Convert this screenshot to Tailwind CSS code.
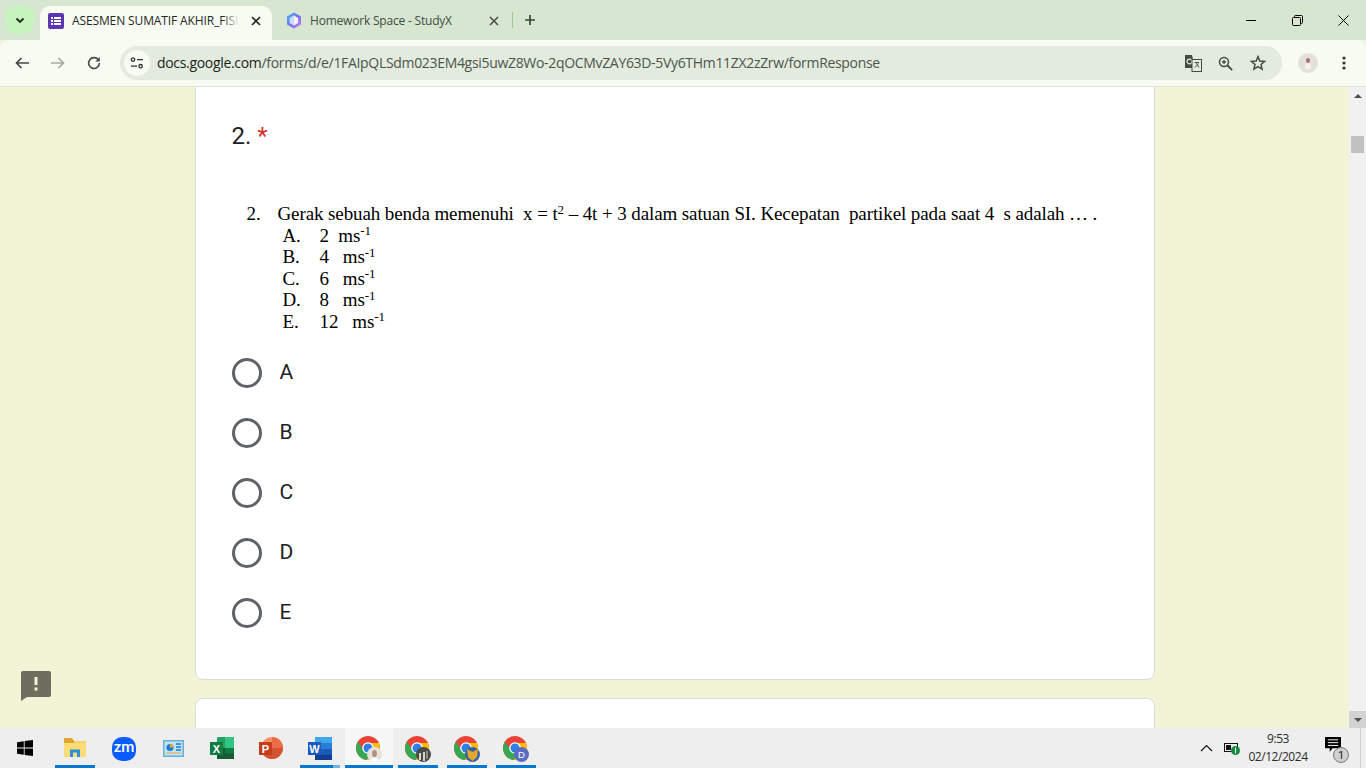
<!DOCTYPE html>
<html lang="en">
<head>
    <meta charset="UTF-8">
    <meta name="viewport" content="width=device-width, initial-scale=1.0">
    <title>ASESMEN SUMATIF AKHIR_FISIKA</title>
    <script src="https://cdn.jsdelivr.net/npm/@tailwindcss/browser@4"></script>
</head>
<body class="w-[1366px] h-[768px] overflow-hidden flex flex-col bg-[#f3f3d5] font-['Roboto',sans-serif]">

    <!-- shared chrome logo -->
    <svg class="hidden">
        <symbol id="chrome" viewBox="0 0 24 24">
            <circle cx="12" cy="12" r="12" fill="#ea4335"/>
            <path d="M12 7H22.8A12 12 0 0 1 10.6 23.9L16.3 14.5Z" fill="#fbbc05"/>
            <path d="M7.7 14.5 2 5.4A12 12 0 0 0 10.6 23.9L16.3 14.5Z" fill="#34a853"/>
            <circle cx="12" cy="12" r="5.8" fill="#fff"/>
            <circle cx="12" cy="12" r="4.5" fill="#2f7fe6"/>
        </symbol>
    </svg>

    <!-- tab strip -->
    <div class="h-[40px] bg-[#d6e6d0] flex items-start shrink-0 relative">
        <div class="w-[28px] h-[28px] mt-[6px] ml-[6px] rounded-[9px] bg-[#c7f5bd] flex items-center justify-center">
            <svg width="10" height="7" viewBox="0 0 10 7"><path d="M1.5 1.5 5 5l3.5-3.5" fill="none" stroke="#1f2a1f" stroke-width="1.8"/></svg>
        </div>
        <div class="w-[232px] h-[34px] mt-[6px] ml-[6px] bg-[#f7fbf2] rounded-t-[10px] flex items-center pl-[8px] pr-[11px] pb-[5px]">
            <div class="w-[16px] h-[16px] rounded-[2px] bg-[#5e35b1] flex items-center justify-center gap-[1px] shrink-0">
                <div class="flex flex-col gap-[1px]">
                    <div class="w-[2px] h-[2px] bg-white"></div>
                    <div class="w-[2px] h-[2px] bg-white"></div>
                    <div class="w-[2px] h-[2px] bg-white"></div>
                </div>
                <div class="flex flex-col gap-[1px]">
                    <div class="w-[7px] h-[2px] bg-white"></div>
                    <div class="w-[7px] h-[2px] bg-white"></div>
                    <div class="w-[7px] h-[2px] bg-white"></div>
                </div>
            </div>
            <div class="ml-[8px] w-[167px] h-[18px] relative leading-[18px] overflow-hidden whitespace-nowrap text-[12px] text-[#1f2a1f] font-['Open_Sans',sans-serif] tracking-[-0.12px]">ASESMEN SUMATIF AKHIR_FISIKA
                <div class="absolute right-0 top-0 w-[16px] h-full bg-gradient-to-r from-transparent to-[#f7fbf2]"></div>
            </div>
            <svg class="ml-auto" width="10" height="10" viewBox="0 0 10 10"><path d="M1 1l8 8M9 1 1 9" stroke="#1f2a1f" stroke-width="1.6"/></svg>
        </div>
        <div class="w-[241px] h-[34px] mt-[6px] flex items-center pl-[14px] pr-[14px] pb-[5px]">
            <svg width="16" height="17" viewBox="0 0 16 17">
                <defs>
                    <linearGradient id="gem" x1="0" y1="0" x2="1" y2="1">
                        <stop offset="0" stop-color="#38b6f5"/>
                        <stop offset=".55" stop-color="#7b6cf2"/>
                        <stop offset="1" stop-color="#d77bf0"/>
                    </linearGradient>
                </defs>
                <path d="M8 .5 15 4.5V12.5L8 16.5 1 12.5V4.5Z" fill="url(#gem)"/>
                <path d="M8 3.5 12.2 6V11L8 13.5 3.8 11V6Z" fill="#eef0ff"/>
                <path d="M8 3.5V13.5L3.8 11V6Z" fill="#c9d8ff"/>
            </svg>
            <div class="ml-[8px] text-[12px] leading-[18px] text-[#444b44] whitespace-nowrap font-['Open_Sans',sans-serif] tracking-[-0.2px]">Homework Space - StudyX</div>
            <svg class="ml-auto" width="10" height="10" viewBox="0 0 10 10"><path d="M1 1l8 8M9 1 1 9" stroke="#444b44" stroke-width="1.5"/></svg>
        </div>
        <div class="w-[1px] h-[16px] mt-[12px] -ml-[1px] bg-[#9fc695]"></div>
        <svg class="mt-[14px] ml-[11px]" width="12" height="12" viewBox="0 0 12 12"><path d="M6 1v10M1 6h10" stroke="#3c463c" stroke-width="1.7"/></svg>
        <div class="ml-auto flex items-center h-[40px]">
            <div class="w-[46px] flex justify-center"><div class="w-[10px] h-[1px] bg-black"></div></div>
            <div class="w-[46px] flex justify-center">
                <svg width="11" height="11" viewBox="0 0 11 11" fill="none" stroke="#000"><rect x=".5" y="2.5" width="8" height="8" rx="1"/><path d="M2.5 2.5V1.5a1 1 0 0 1 1-1h6a1 1 0 0 1 1 1v6a1 1 0 0 1-1 1h-1"/></svg>
            </div>
            <div class="w-[46px] flex justify-center">
                <svg width="11" height="11" viewBox="0 0 11 11"><path d="M.5.5l10 10M10.5.5l-10 10" stroke="#000"/></svg>
            </div>
        </div>
    </div>

    <!-- toolbar -->
    <div class="h-[47px] bg-[#f7fbf2] rounded-t-[8px] border-b border-[#dfe3da] flex items-center shrink-0">
        <div class="w-[120px] flex items-center pl-[15px] shrink-0">
            <svg width="14" height="12" viewBox="0 0 14 12"><path d="M6.5 1 1.5 6l5 5M2 6h12" fill="none" stroke="#444b44" stroke-width="1.7"/></svg>
            <svg class="ml-[22px]" width="14" height="12" viewBox="0 0 14 12"><path d="M7.5 1l5 5-5 5M12 6H0" fill="none" stroke="#a4aaa2" stroke-width="1.7"/></svg>
            <svg class="ml-[22px]" width="14" height="14" viewBox="0 0 14 14"><path d="M11.6 4.2A5.4 5.4 0 1 0 12.4 7" fill="none" stroke="#444b44" stroke-width="1.6"/><path d="M12.8 1v4.4H8.4Z" fill="#444b44"/></svg>
        </div>
        <div class="w-[1162px] h-[34px] rounded-full bg-[#e3ebdf] flex items-center pl-[4px]">
            <div class="w-[26px] h-[26px] rounded-full bg-[#f7fbf2] flex items-center justify-center shrink-0">
                <svg width="14" height="12" viewBox="0 0 14 12" fill="none" stroke="#2d352d" stroke-width="1.3"><circle cx="3" cy="2.6" r="1.7"/><path d="M7 2.6h6M1 9.2h6"/><circle cx="10.6" cy="9.2" r="1.7"/></svg>
            </div>
            <div class="ml-[7px] text-[14px] leading-[18px] whitespace-nowrap font-['Open_Sans',sans-serif] tracking-[-0.32px] text-[#4d544d]"><span class="text-[#1c231c]">docs.google.com</span>/forms/d/e/1FAIpQLSdm023EM4gsi5uwZ8Wo-2qOCMvZAY63D-5Vy6THm11ZX2zZrw/formResponse</div>
            <div class="ml-auto flex items-center pr-[16px]">
                <svg width="17" height="17" viewBox="0 0 17 17">
                    <path d="M0 0h7l3 13H0Z" fill="#444b44"/>
                    <circle cx="4.5" cy="6.5" r="2.4" fill="none" stroke="#e3ebdf" stroke-width="1.2"/>
                    <rect x="7" y="4.5" width="9.5" height="12" fill="#e3ebdf" stroke="#444b44"/>
                    <path d="M9.5 7.5h4.5M11 7.5l3 5M13.5 8.5l-3.5 4" stroke="#444b44" stroke-width=".9"/>
                </svg>
                <svg class="ml-[16px]" width="15" height="15" viewBox="0 0 15 15" fill="none" stroke="#444b44"><circle cx="6" cy="6" r="4.5" stroke-width="1.5"/><path d="M9.5 9.5l4.7 4.7" stroke-width="1.8"/><path d="M4 6h4M6 4v4" stroke-width="1.3"/></svg>
                <svg class="ml-[17px]" width="16" height="16" viewBox="0 0 16 16"><path d="M8 1.6 9.8 6l4.8.4-3.6 3.1 1.1 4.7L8 11.7l-4.1 2.5L5 9.5 1.4 6.4 6.2 6Z" fill="none" stroke="#444b44" stroke-width="1.5"/></svg>
            </div>
        </div>
        <div class="ml-[16px] w-[20px] h-[20px] rounded-full bg-[#e4e0da] flex flex-col items-center justify-center shrink-0">
            <div class="w-[4px] h-[5px] rounded-full bg-[#a8776a]"></div>
            <div class="w-[6px] h-[6px] rounded-t-[3px] bg-[#f4f2ef]"></div>
        </div>
        <svg class="ml-[24px]" width="4" height="14" viewBox="0 0 4 14" fill="#2d352d"><circle cx="2" cy="2" r="1.6"/><circle cx="2" cy="7" r="1.6"/><circle cx="2" cy="12" r="1.6"/></svg>
    </div>

    <!-- page -->
    <div class="flex-1 flex min-h-0">
        <div class="flex-1 overflow-hidden relative flex flex-col items-center">
            <div class="w-[960px] h-[601px] -mt-[8px] shrink-0 bg-white border border-[#dadce0] rounded-[8px] pl-[36px] pt-[41px]">
                <div class="text-[24px] leading-[30px] text-[#202124]">2. <span class="text-[#d93025]">*</span></div>
                <div class="mt-[52px] ml-[15px] font-['Liberation_Serif',serif] text-black text-[19px] tracking-[-0.1px]">
                    <div class="flex whitespace-pre h-[21.6px] leading-[21.6px]"><span class="w-[31px]">2.</span><span>Gerak sebuah benda memenuhi  x = t<sup class="text-[13px] leading-none">2</sup> – 4t + 3 dalam satuan SI. Kecepatan  partikel pada saat 4  s adalah … .</span></div>
                    <div class="ml-[36px] whitespace-pre flex h-[21.6px] leading-[21.6px]"><span class="w-[37px]">A.</span><span>2  ms<sup class="text-[13px] leading-none">-1</sup></span></div>
                    <div class="ml-[36px] whitespace-pre flex h-[21.6px] leading-[21.6px]"><span class="w-[37px]">B.</span><span>4   ms<sup class="text-[13px] leading-none">-1</sup></span></div>
                    <div class="ml-[36px] whitespace-pre flex h-[21.6px] leading-[21.6px]"><span class="w-[37px]">C.</span><span>6   ms<sup class="text-[13px] leading-none">-1</sup></span></div>
                    <div class="ml-[36px] whitespace-pre flex h-[21.6px] leading-[21.6px]"><span class="w-[37px]">D.</span><span>8   ms<sup class="text-[13px] leading-none">-1</sup></span></div>
                    <div class="ml-[36px] whitespace-pre flex h-[21.6px] leading-[21.6px]"><span class="w-[37px]">E.</span><span>12   ms<sup class="text-[13px] leading-none">-1</sup></span></div>
                </div>
                <div class="mt-[25px] flex flex-col gap-[30px]">
                    <div class="flex items-center h-[30px]"><div class="w-[30px] h-[30px] rounded-full border-[3px] border-[#5f6368]"></div><span class="ml-[18px] text-[21px] text-[#202124]">A</span></div>
                    <div class="flex items-center h-[30px]"><div class="w-[30px] h-[30px] rounded-full border-[3px] border-[#5f6368]"></div><span class="ml-[18px] text-[21px] text-[#202124]">B</span></div>
                    <div class="flex items-center h-[30px]"><div class="w-[30px] h-[30px] rounded-full border-[3px] border-[#5f6368]"></div><span class="ml-[18px] text-[21px] text-[#202124]">C</span></div>
                    <div class="flex items-center h-[30px]"><div class="w-[30px] h-[30px] rounded-full border-[3px] border-[#5f6368]"></div><span class="ml-[18px] text-[21px] text-[#202124]">D</span></div>
                    <div class="flex items-center h-[30px]"><div class="w-[30px] h-[30px] rounded-full border-[3px] border-[#5f6368]"></div><span class="ml-[18px] text-[21px] text-[#202124]">E</span></div>
                </div>
            </div>
            <div class="w-[960px] h-[100px] mt-[18px] shrink-0 bg-white border border-[#dadce0] rounded-[8px]"></div>
            <!-- report button floats over page -->
            <svg class="absolute left-[21px] top-[584px]" width="30" height="30" viewBox="0 0 30 30">
                <path d="M2 0h26a2 2 0 0 1 2 2v22a2 2 0 0 1-2 2H6l-6 4V2a2 2 0 0 1 2-2Z" fill="#6d6e5d"/>
                <rect x="13.5" y="6" width="3" height="8" fill="#f3f3d5"/><rect x="13.5" y="16.5" width="3" height="3" fill="#f3f3d5"/>
            </svg>
        </div>
        <!-- scrollbar -->
        <div class="w-[17px] bg-[#f1f1f1] flex flex-col items-center shrink-0 relative">
            <div class="h-[17px] w-full flex items-center justify-center"><div class="w-0 h-0 border-x-[4px] border-x-transparent border-b-[4px] border-b-[#505050]"></div></div>
            <div class="w-[13px] h-[17px] mt-[32px] bg-[#c1c1c1]"></div>
            <div class="mt-auto h-[17px] w-full bg-[#d2d2d2] flex items-center justify-center"><div class="w-0 h-0 border-x-[4px] border-x-transparent border-t-[4px] border-t-[#505050]"></div></div>
        </div>
    </div>

    <!-- taskbar -->
    <div class="h-[40px] bg-[#eeeeee] flex items-stretch shrink-0">
        <div class="w-[50px] flex items-center justify-center">
            <svg width="16" height="16" viewBox="0 0 16 16" fill="#000"><path d="M0 2.2 6.8 1.2V7.5H0ZM7.6 1.1 16 0V7.5H7.6ZM0 8.4H6.8V14.8L0 13.8ZM7.6 8.4H16V16L7.6 14.9Z"/></svg>
        </div>
        <div class="w-[40px] ml-[5px] border-b-[3px] border-[#0078d4] flex items-center justify-center pt-[2px]">
            <svg width="22" height="19" viewBox="0 0 22 19"><path d="M0 3h22v16H0Z" fill="#f9d463"/><path d="M0 1a1 1 0 0 1 1-1h7l2 2.5V5H0Z" fill="#e0a52c"/><path d="M0 5h22v14H0Z" fill="#fbdc77"/><path d="M6 11.5h10V19h-3v-4.5H9V19H6Z" fill="#2a8fd6"/></svg>
        </div>
        <div class="w-[40px] ml-[9px] flex items-center justify-center pt-[1px]">
            <div class="w-[24px] h-[24px] rounded-[10px] bg-[#0b5cff] text-white text-[15px] font-medium flex items-center justify-center leading-none pb-[2px]">zm</div>
        </div>
        <div class="w-[40px] ml-[9px] flex items-center justify-center">
            <svg width="21" height="17" viewBox="0 0 21 17"><rect width="21" height="17" fill="#6aaed6"/><rect x="1.5" y="1.5" width="18" height="14" fill="#bfe3f7"/><circle cx="7" cy="7.5" r="3.6" fill="#1c7fc9"/><path d="M7 7.5V3.9a3.6 3.6 0 0 1 3.6 3.6Z" fill="#f3a53a"/><path d="M13 4h5M13 7h5M13 10h5" stroke="#1c7fc9" stroke-width="1.3"/><path d="M3 13h15" stroke="#f3a53a"/></svg>
        </div>
        <div class="w-[40px] ml-[9px] flex items-center justify-center">
            <svg width="24" height="24" viewBox="0 0 24 24">
                <rect x="7" y="1" width="17" height="22" rx="1" fill="#21a366"/><rect x="15" y="1" width="9" height="11" fill="#33c481"/><rect x="7" y="12" width="17" height="11" fill="#185c37"/><rect x="15" y="12" width="9" height="5.5" fill="#107c41"/>
                <rect x="0" y="6" width="13" height="13" fill="#107c41"/>
                <text x="6.5" y="16.5" text-anchor="middle" font-family="Liberation Sans" font-size="11" font-weight="700" fill="#fff">X</text>
            </svg>
        </div>
        <div class="w-[40px] ml-[9px] flex items-center justify-center">
            <svg width="24" height="24" viewBox="0 0 24 24">
                <circle cx="13" cy="12" r="11" fill="#ff8f6b"/><path d="M13 12V1a11 11 0 0 1 11 11Z" fill="#ed6c47"/><path d="M13 12h11a11 11 0 0 1-22 0Z" fill="#d35230"/>
                <rect x="0" y="6" width="13" height="13" fill="#c43e1c"/>
                <text x="6.5" y="16.5" text-anchor="middle" font-family="Liberation Sans" font-size="11" font-weight="700" fill="#fff">P</text>
            </svg>
        </div>
        <div class="w-[40px] ml-[9px] relative border-b-[3px] border-[#0078d4] flex items-center justify-center pt-[3px]">
            <svg width="24" height="23" viewBox="0 0 24 23">
                <rect x="7" width="17" height="23" rx="1" fill="#2b7cd3"/><rect x="7" y="0" width="17" height="6" fill="#41a5ee"/><rect x="7" y="12" width="17" height="5.5" fill="#185abd"/><rect x="7" y="17.5" width="17" height="5.5" fill="#103f91"/>
                <rect x="0" y="5" width="13" height="13" fill="#185abd"/>
                <text x="6.5" y="15.5" text-anchor="middle" font-family="Liberation Sans" font-size="11" font-weight="700" fill="#fff">W</text>
            </svg>
            <div class="absolute right-0 -bottom-[3px] w-[7px] h-[3px] bg-[#6fb2e6]"></div>
        </div>
        <div class="w-[48px] ml-[5px] bg-[#f7f7f7] border-b-[3px] border-[#0078d4] flex items-center justify-center pt-[4px]">
            <svg width="26" height="26" viewBox="0 0 26 26">
                <use href="#chrome" width="24" height="24"/>
                <circle cx="18.5" cy="18.5" r="7.5" fill="#e6e3de"/><ellipse cx="18.5" cy="17.5" rx="2.4" ry="3.6" fill="#b58b7f"/><path d="M14 24q4.5-5 9 0a7.5 7.5 0 0 1-9 0Z" fill="#fff"/>
            </svg>
        </div>
        <div class="w-[40px] ml-[5px] border-b-[3px] border-[#0078d4] flex items-center justify-center pt-[4px]">
            <svg width="26" height="26" viewBox="0 0 26 26">
                <use href="#chrome" width="24" height="24"/>
                <circle cx="18.5" cy="18.5" r="7.5" fill="#4a4a48"/><path d="M14 24v-7h2v7ZM18 25v-9h2v9Z" fill="#d9d6cf"/><path d="M21 23v-8h2v8Z" fill="#8a8a86"/>
            </svg>
        </div>
        <div class="w-[40px] ml-[9px] border-b-[3px] border-[#0078d4] flex items-center justify-center pt-[4px]">
            <svg width="26" height="26" viewBox="0 0 26 26">
                <use href="#chrome" width="24" height="24"/>
                <circle cx="18.5" cy="18.5" r="7.5" fill="#3b5f9e"/><path d="M13 13l5.500 3 5.500-3-1 8-4.500 4-4.500-4Z" fill="#e0a830"/>
            </svg>
        </div>
        <div class="w-[40px] ml-[9px] border-b-[3px] border-[#0078d4] flex items-center justify-center pt-[4px]">
            <svg width="26" height="26" viewBox="0 0 26 26">
                <use href="#chrome" width="24" height="24"/>
                <circle cx="18.5" cy="18.5" r="7.5" fill="#5c6bc0"/>
                <text x="18.5" y="22" text-anchor="middle" font-family="Liberation Sans" font-size="9.500" fill="#fff">D</text>
            </svg>
        </div>
        <div class="ml-auto flex items-center">
            <svg width="13" height="8" viewBox="0 0 13 8"><path d="M1 7l5.500-5.500L12 7" fill="none" stroke="#111" stroke-width="1.2"/></svg>
            <svg class="ml-[11px]" width="16" height="13" viewBox="0 0 16 13"><rect x=".5" y="1.500" width="13" height="8" fill="none" stroke="#111"/><rect x="2" y="3" width="5" height="5" fill="#111"/><circle cx="11.500" cy="8.500" r="4.500" fill="#10893e"/><path d="M11.500 5.500v6" stroke="#fff"/></svg>
            <div class="ml-[1px] w-[74px] flex flex-col items-center text-[12px] leading-[18px] text-[#2b2b2b] font-['Open_Sans',sans-serif] tracking-[-0.45px]">
                <span class="-mt-[1px]">9:53</span>
                <span>02/12/2024</span>
            </div>
            <div class="w-[42px] ml-[3px] relative flex items-center h-full">
                <svg class="ml-[7px] -mt-[8px]" width="16" height="15" viewBox="0 0 17 16"><path d="M0 0h17v12H8l-3 4v-4H0Z" fill="#000"/><path d="M3 3h11M3 6h11M3 9h11" stroke="#fff"/></svg>
                <div class="absolute left-[15px] top-[19px] w-[16px] h-[16px] rounded-full bg-[#d0d0d0] border border-[#777] flex items-center justify-center text-[11px] leading-none text-[#222]">1</div>
            </div>
            <div class="w-[1px] h-full bg-[#d0d0d0] mr-[5px]"></div>
        </div>
    </div>
</body>
</html>
